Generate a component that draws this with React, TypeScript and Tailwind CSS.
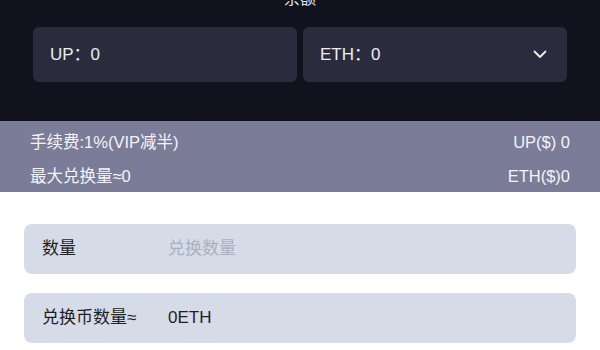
import React from "react";

const font = { fontFamily: '"Liberation Sans", Arial, "Noto Sans CJK SC", sans-serif' };

export default function App() {
  return (
    <div className="w-[600px] h-[350px] overflow-hidden bg-white" style={font}>
      <div className="h-[121px] bg-[#10121e] flex flex-col overflow-hidden">
        <div className="h-[27px] flex justify-center">
          <span className="text-[16px] leading-[16px] -mt-[9px] text-[#e6e7ee]">余额</span>
        </div>
        <div className="grid grid-cols-2 gap-[6px] px-[33px]">
          <div className="h-[55px] rounded-[6px] bg-[#2a2c3d] flex items-center pl-[17px] text-[17px] text-[#eceef4]">
            UP：0
          </div>
          <div className="h-[55px] rounded-[6px] bg-[#2a2c3d] flex items-center justify-between pl-[17px] pr-[20px] text-[17px] text-[#eceef4]">
            <span>ETH：0</span>
            <svg width="14" height="9" viewBox="0 0 14 9" fill="none">
              <polyline points="1.5,1.5 7,7 12.5,1.5" stroke="#eceef4" strokeWidth="1.8" strokeLinecap="round" strokeLinejoin="round" />
            </svg>
          </div>
        </div>
      </div>
      <div className="h-[71px] bg-[#7a7c98] flex flex-col pt-[4px] px-[30px] text-[16.5px] text-[#f4f4f8]">
        <div className="h-[35px] flex items-center justify-between">
          <span>手续费:1%(VIP减半)</span>
          <span>UP($) 0</span>
        </div>
        <div className="h-[32px] flex items-center justify-between">
          <span>最大兑换量≈0</span>
          <span>ETH($)0</span>
        </div>
      </div>
      <div className="flex flex-col gap-[19px] px-[24px] pt-[32px]">
        <div className="h-[50px] rounded-[8px] bg-[#d6dce7] flex items-center pl-[18px] text-[17px]">
          <span className="w-[126px] text-[#1e1f24]">数量</span>
          <span className="text-[#aab0bd]">兑换数量</span>
        </div>
        <div className="h-[50px] rounded-[8px] bg-[#d6dce7] flex items-center pl-[18px] text-[17px]">
          <span className="w-[126px] text-[#1e1f24]">兑换币数量≈</span>
          <span className="text-[#1e1f24]">0ETH</span>
        </div>
      </div>
    </div>
  );
}
